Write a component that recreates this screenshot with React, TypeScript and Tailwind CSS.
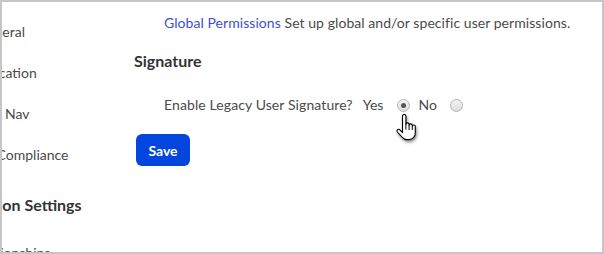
import React from "react";

const font = { fontFamily: "Lato, 'Open Sans', sans-serif" };

function Radio({ checked }: { checked?: boolean }) {
  return (
    <span className="relative inline-flex h-[13px] w-[13px] items-center justify-center rounded-full border border-[#b5b5b5] bg-gradient-to-b from-[#f4f4f4] to-[#dcdcdc]">
      {checked && <span className="h-[5px] w-[5px] rounded-full bg-[#555]" />}
    </span>
  );
}

function Cursor() {
  return (
    <svg width="22" height="28" viewBox="0 0 22 28" className="absolute left-[394px] top-[112px]" style={{ filter: "drop-shadow(1px 2px 1.5px rgba(0,0,0,0.45))" }}>
      <path
        d="M6.5 2.2c0-1 .8-1.7 1.7-1.7s1.7.8 1.7 1.7v8.3c0-.9.7-1.6 1.6-1.6s1.6.7 1.6 1.6v1c0-.9.7-1.6 1.6-1.6s1.6.7 1.6 1.6v1c0-.9.7-1.5 1.5-1.5s1.5.7 1.5 1.5v6.5c0 3.6-2.6 6.6-6.3 6.6H11c-2.2 0-3.6-.9-4.9-2.5L1.4 18c-.6-.8-.5-1.8.2-2.3.7-.6 1.7-.5 2.3.2l2.6 2.8V2.2z"
        fill="#fff"
        stroke="#000"
        strokeWidth="1.1"
        strokeLinejoin="round"
      />
      <path d="M9.9 10.5v5M13.1 11.5v4.5M16.3 12.5v3.5" stroke="#000" strokeWidth="1" fill="none" />
    </svg>
  );
}

export default function App() {
  const items = [
    { text: "General", ml: "ml-[-25px]" },
    { text: "Application", ml: "ml-[-35px]" },
    { text: "Top Nav", ml: "ml-[-23px]" },
    { text: "Email Compliance", ml: "ml-[-42px]" },
  ];
  return (
    <div className="relative h-[254px] w-[604px] overflow-hidden border-2 border-[#c6c6c6] bg-white text-[#4a4a4a]" style={font}>
      <div className="flex h-full">
        <div className="w-[132px] shrink-0 overflow-hidden pt-[21px] text-[14px]">
          {items.map((it) => (
            <div key={it.text} className={`h-[41px] whitespace-nowrap leading-[18px] ${it.ml}`}>
              {it.text}
            </div>
          ))}
          <div className="mt-[8px] ml-[-63px] whitespace-nowrap text-[16px] font-bold leading-[20px] text-[#333]">
            Application Settings
          </div>
          <div className="mt-[29px] ml-[-33px] whitespace-nowrap text-[14px] leading-[18px]">Relationships</div>
        </div>
        <div className="flex flex-col pt-[12px]">
          <div className="ml-[30px] text-[14px] leading-[18px] tracking-[0.06px]">
            <span className="text-[#3b4fd8]">Global Permissions</span> Set up global and/or specific user permissions.
          </div>
          <div className="mt-[19px] text-[16px] font-bold leading-[20px] text-[#333]">Signature</div>
          <div className="ml-[30px] mt-[25px] flex items-center text-[14px] leading-[18px]">
            <span className="tracking-[0.1px]">Enable Legacy User Signature?</span>
            <span className="ml-[10px]">Yes</span>
            <span className="ml-[14px] inline-flex"><Radio checked /></span>
            <span className="ml-[8px]">No</span>
            <span className="ml-[13px] inline-flex"><Radio /></span>
          </div>
          <div className="mt-[20px]">
            <button className="ml-[2px] h-[32px] w-[54px] rounded-[6px] bg-[#0246dd] text-[14px] font-bold text-white">Save</button>
          </div>
        </div>
      </div>
      <Cursor />
    </div>
  );
}
